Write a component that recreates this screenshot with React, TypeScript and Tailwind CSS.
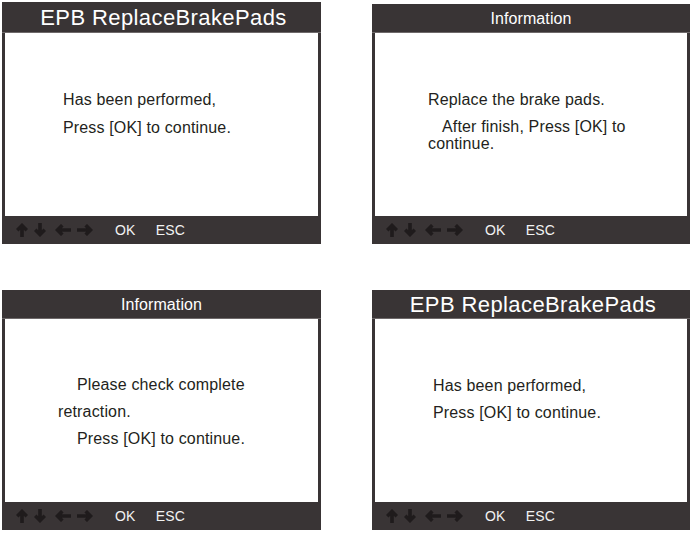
import type { ReactNode } from "react";

type Line = {
  text: string;
  className?: string;
};

type Screen = {
  title: string;
  big?: boolean;
  panelClass: string;
  headerClass: string;
  bodyClass: string;
  lines: Line[];
};

const screens: Screen[] = [
  {
    title: "EPB ReplaceBrakePads",
    big: true,
    panelClass: "h-[242px]",
    headerClass: "h-[31px]",
    bodyClass: "pt-[58px] pl-[58px]",
    lines: [
      { text: "Has been performed," },
      { text: "Press [OK] to continue.", className: "mt-[10px]" }
    ]
  },
  {
    title: "Information",
    panelClass: "mt-[2px] h-[240px]",
    headerClass: "h-[29px]",
    bodyClass: "pt-[58px] pl-[53px]",
    lines: [
      { text: "Replace the brake pads." },
      { text: "After finish, Press [OK] to", className: "mt-[9px] pl-[14px]" },
      { text: "continue.", className: "-mt-[1px]" }
    ]
  },
  {
    title: "Information",
    panelClass: "h-[240px]",
    headerClass: "h-[29px]",
    bodyClass: "pt-[57px] pl-[53px]",
    lines: [
      { text: "Please check complete", className: "pl-[19px]" },
      { text: "retraction.", className: "mt-[9px]" },
      { text: "Press [OK] to continue.", className: "mt-[9px] pl-[19px]" }
    ]
  },
  {
    title: "EPB ReplaceBrakePads",
    big: true,
    panelClass: "h-[240px]",
    headerClass: "h-[29px]",
    bodyClass: "pt-[58px] pl-[58px]",
    lines: [
      { text: "Has been performed," },
      { text: "Press [OK] to continue.", className: "mt-[9px]" }
    ]
  }
];

function ArrowIcon({ dir }: { dir: "up" | "down" | "left" | "right" }) {
  if (dir === "up" || dir === "down") {
    return (
      <svg
        className={dir === "down" ? "h-[14px] w-[12px] rotate-180" : "h-[14px] w-[12px]"}
        viewBox="0 0 12 14"
        fill="none"
        stroke="#1f1b1c"
        strokeWidth={3.6}
      >
        <path d="M6 14V2.5M1.2 7.3L6 2.5l4.8 4.8" />
      </svg>
    );
  }
  return (
    <svg
      className={dir === "left" ? "h-[12px] w-[16px] rotate-180" : "h-[12px] w-[16px]"}
      viewBox="0 0 16 12"
      fill="none"
      stroke="#1f1b1c"
      strokeWidth={3.6}
    >
      <path d="M0 6h13.5M8.7 1.2L13.5 6l-4.8 4.8" />
    </svg>
  );
}

function Footer() {
  return (
    <div className="flex h-[28px] shrink-0 items-center bg-[#393435] pl-[14px] text-[14px] tracking-[0.2px] text-[#f2f2f2]">
      <div className="flex items-center">
        <ArrowIcon dir="up" />
        <span className="ml-[6px]">
          <ArrowIcon dir="down" />
        </span>
        <span className="ml-[9px]">
          <ArrowIcon dir="left" />
        </span>
        <span className="ml-[6px]">
          <ArrowIcon dir="right" />
        </span>
      </div>
      <span className="ml-[22px] leading-none">OK</span>
      <span className="ml-[20px] leading-none">ESC</span>
    </div>
  );
}

function Panel({ screen }: { screen: Screen }) {
  const titleClass = screen.big
    ? "pl-[4px] text-[22px] tracking-[0.4px]"
    : "text-[16px] tracking-[0.1px]";
  return (
    <div className={`flex flex-col bg-[#393435] ${screen.panelClass}`}>
      <div
        className={`flex shrink-0 items-center justify-center border-b border-[#6e696a] pt-[1px] text-white ${screen.headerClass} ${titleClass}`}
      >
        <span className="leading-none">{screen.title}</span>
      </div>
      <div
        className={`flex-1 border-x-[3px] border-[#393435] bg-white text-[16px] tracking-[0.15px] text-[#231f20] ${screen.bodyClass}`}
      >
        {screen.lines.map((line, i) => (
          <Row key={i} className={line.className}>
            {line.text}
          </Row>
        ))}
      </div>
      <Footer />
    </div>
  );
}

function Row({ children, className }: { children: ReactNode; className?: string }) {
  return <div className={`whitespace-nowrap leading-[18px] ${className ?? ""}`}>{children}</div>;
}

export default function App() {
  return (
    <div
      className="min-h-screen bg-white pl-[2px] pt-[2px]"
      style={{ fontFamily: '"Liberation Sans", Arial, sans-serif' }}
    >
      <div className="grid grid-cols-[319px_318px] items-start gap-x-[51px] gap-y-[46px]">
        {screens.map((screen, i) => (
          <Panel key={i} screen={screen} />
        ))}
      </div>
    </div>
  );
}
